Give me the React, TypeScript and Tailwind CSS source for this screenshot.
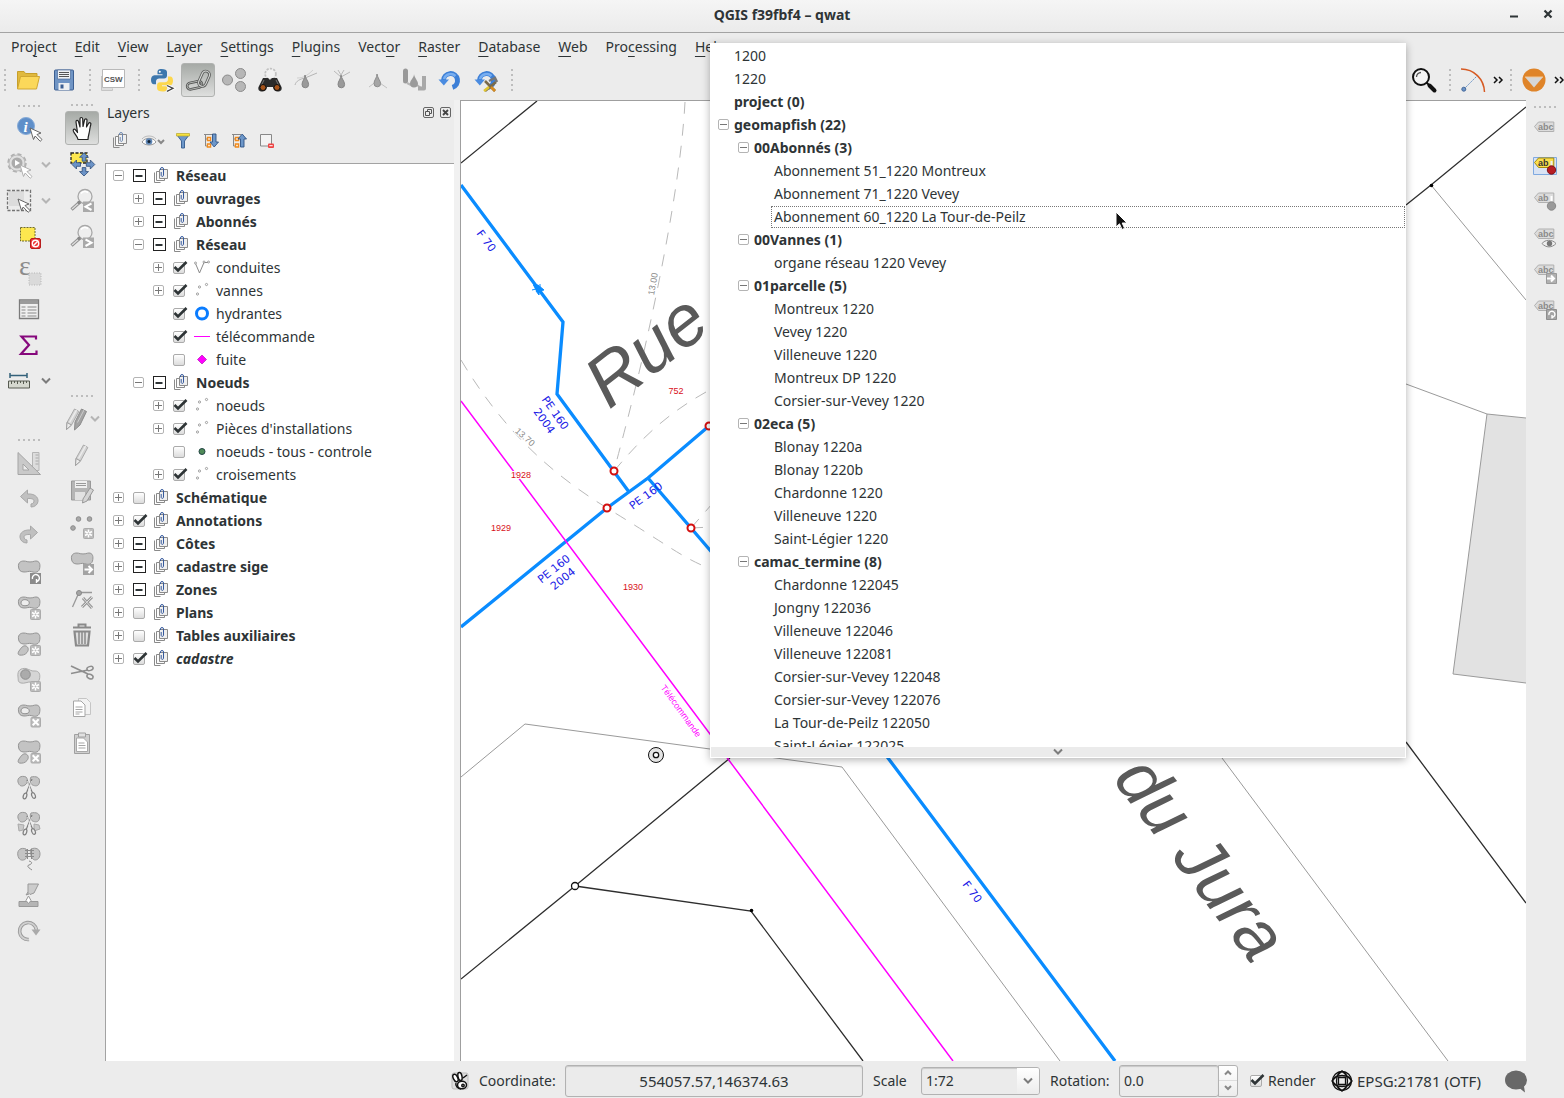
import React from "react";

type IconProps = { children: React.ReactNode; className?: string; box?: string };

function Svg({ children, className = "size-6", box = "0 0 24 24" }: IconProps) {
  return (
    <svg viewBox={box} className={`${className} shrink-0 overflow-visible`} fill="none" aria-hidden="true">
      {children}
    </svg>
  );
}

const BLOB =
  "M1.5 8C.8 3 4.5 1.5 8.500 2.2c3 1 6 1 9 0C21.500 1.200 23.500 4 22.800 8.500c-.5 5-4.500 5.500-8 4.200-3-1-5 .5-7.800.3C3.500 13 1.800 11 1.500 8Z";

const Blob = () => <path d={BLOB} fill="#c3c3c3" stroke="#959595" />;

const StarBadge = ({ x = 13, y = 14 }: { x?: number; y?: number }) => (
  <g transform={`translate(${x} ${y})`}>
    <rect x=".5" y=".5" width="10" height="10" rx="1" fill="#bcbcbc" stroke="#ababab" />
    <path d="M5.500 1.500v8M2 3.500l7 4M9 3.500l-7 4" stroke="#fff" strokeWidth="1.500" />
    <circle cx="5.500" cy="5.500" r="1" fill="#bcbcbc" />
  </g>
);

const CrossBadge = () => (
  <g transform="translate(13.500 14)">
    <rect x=".5" y=".5" width="9.500" height="9.500" rx="1" fill="#bcbcbc" stroke="#ababab" />
    <path d="M2.200 2.200l6 6M8.200 2.200l-6 6" stroke="#fff" strokeWidth="2" />
  </g>
);

const Egg = () => (
  <path d="M9 15c2.500 1 3 4 1 6.500-2 2.500-5 3-7.500 2.500-2-.5-1.500-2.500-.5-4 2-3 4-6 7-5Z" fill="#c3c3c3" stroke="#959595" />
);

const Snips = () => (
  <g stroke="#7e7e7e" strokeWidth="1.200">
    <path d="M10 5l6 14M15 4l-6 15" />
    <path d="M10.500 6l3 9M14.500 6l-3 9" stroke="#eee" strokeWidth=".8" />
    <ellipse cx="8" cy="21" rx="1.700" ry="3" fill="#ececec" transform="rotate(18 8 21)" />
    <ellipse cx="16.500" cy="20.500" rx="1.700" ry="3" fill="#ececec" transform="rotate(-22 16.500 20.500)" />
  </g>
);

const Pointer = ({ x, y, stroke = "#666" }: { x: number; y: number; stroke?: string }) => (
  <path
    transform={`translate(${x} ${y})`}
    d="M0 0l11 5-4 1.500 5 5-1.800 1.800-5-5.300L3.500 11.500Z"
    fill="#fff"
    stroke={stroke}
    strokeLinejoin="round"
  />
);

const Pencil = ({ x = 0, y = 0 }: { x?: number; y?: number }) => (
  <g transform={`translate(${x} ${y})`} strokeLinejoin="round">
    <path d="M5 14.500L12.500 1l4.300 2.500L9.500 17 4.500 21.500Z" fill="#d4d4d4" stroke="#a9a9a9" />
    <path d="M7.500 14.500l7-12.500" stroke="#ececec" strokeWidth="1.500" />
    <path d="M5 14.500l4.500 2.500L4.500 21.500Z" fill="#ececec" stroke="#a0a0a0" />
  </g>
);

const Floppy = ({ body, edge, paper }: { body: string; edge: string; paper: string }) => (
  <>
    <path d="M2.500 3a1 1 0 0 1 1-1h17a1 1 0 0 1 1 1v18a1 1 0 0 1-1 1h-17a1 1 0 0 1-1-1Z" fill={body} stroke={edge} />
    <path d="M5.500 2h13v9h-13Z" fill={paper} stroke={edge} strokeWidth=".6" />
    <path d="M7 4.500h10M7 6.500h10M7 8.500h10" stroke="#555" />
    <path d="M6.500 15h11v7h-11Z" fill={paper} />
    <path d="M8.500 16.500h3v4h-3Z" fill={edge} />
  </>
);

const Arrow4 = () => (
  <path
    d="M14 .8l4.500 4.400h-2.700v4h-3.600v-4H9.500ZM14 24l4.500-4.400h-2.700v-4h-3.600v4H9.500ZM2 12.500L6.500 8v2.700h4v3.600h-4V17ZM24.800 12.500L20.300 8v2.700h-4v3.600h4V17Z"
    fill="#6b93c7"
    stroke="#2d4d78"
    strokeWidth=".8"
  />
);

const Label = ({ text, fill = "#dcdcdc", edge = "#b0b0b0", color = "#8a8a8a" }: { text: string; fill?: string; edge?: string; color?: string }) => (
  <g>
    <path d="M1.500 7.500L5.500 3h15.300v9.500H5.500Z" fill={fill} stroke={edge} />
    <text x="5" y="11" fontSize="9" fontWeight="700" fill={color} fontFamily="Liberation Sans, sans-serif">
      {text}
    </text>
  </g>
);

const Undo = () => (
  <>
    <path d="M5.500 12.500a7 7 0 1 1 9 6.800" stroke="#3d7fd6" strokeWidth="5" />
    <path d="M6 11a7 7 0 0 1 11.500-3" stroke="#78aef0" strokeWidth="2.500" />
    <path d="M.5 11.500h10.500l-5.200 6Z" fill="#4a8be0" />
  </>
);

const Magnifier = ({ dir }: { dir: "l" | "r" }) => (
  <Svg>
    <circle cx="15" cy="8.500" r="7" fill="#eee" stroke="#a8a8a8" strokeWidth="1.300" />
    <path d="M11 5.500a5 5 0 0 1 7-1" stroke="#fff" strokeWidth="1.600" />
    <path d="M10 14l-8.500 7.500" stroke="#8e8e8e" strokeWidth="3.200" />
    <path d="M10 14l-8 7" stroke="#dedede" strokeWidth="1.400" />
    <circle cx="9" cy="14.500" r="1.700" fill="#888" />
    <path d="M13 13.500h11V24H13Z" fill="#a9a9a9" />
    <path d={dir === "l" ? "M21.500 15.500l-6 3.200 6 3.300" : "M15.500 15.500l6 3.200-6 3.300"} stroke="#fff" strokeWidth="2" />
  </Svg>
);

const ico = {
  open: (
    <Svg>
      <path d="M1.500 21V3.500h6.500l1.500 2h11.500V9" fill="#e0b93e" stroke="#c79f2a" />
      <path d="M1.500 21L4.500 8.500h19L20.500 21Z" fill="#fbd85a" stroke="#d0a732" strokeLinejoin="round" />
    </Svg>
  ),
  save: (
    <Svg>
      <Floppy body="#6f94c4" edge="#3c5f92" paper="#eef0f2" />
    </Svg>
  ),
  csw: (
    <Svg>
      <path d="M.5 8v14.500h11v-2" fill="#ddd" stroke="#c4c4c4" />
      <path d="M1.500 1.500h22v18h-22Z" fill="#fff" stroke="#b9b9b9" />
      <text x="3" y="14" fontSize="8" fontWeight="700" fill="#555" fontFamily="Liberation Sans, sans-serif">
        CSW
      </text>
    </Svg>
  ),
  python: (
    <Svg>
      <path d="M11.500 1C8 1 7.500 2.500 7.500 4v2.200h5v1H4.500C2 7.200 1 9.500 1 12c0 2.700 1.300 4.300 3 4.300h2v-2.800c0-2 1.500-3 3.200-3h5c1.600 0 2.800-1.300 2.800-2.800V4c0-2-2-3-5.500-3Z" fill="#3d77ad" />
      <path d="M12.800 23.500c3.500 0 4.200-1.500 4.200-3v-2.200h-5v-1h8c2.300 0 3-2.300 3-4.800 0-2.700-1.200-4-2.800-4h-2.200v2.800c0 2-1.400 3-3.100 3h-5c-1.600 0-2.800 1.300-2.800 2.900v3.300c0 2 2.200 3 5.700 3Z" fill="#fdd74c" />
      <circle cx="9.800" cy="3.700" r="1" fill="#fff" />
      <path d="M17 17.500l6 2.800-6 3" stroke="#fff" strokeWidth="3" />
      <path d="M17 17.500l6 2.800-6 3" stroke="#444" strokeWidth="1.300" />
    </Svg>
  ),
  link: (
    <Svg>
      <rect x="1" y="14" width="15" height="6.500" rx="3.250" transform="rotate(-12 8.500 17)" stroke="#505250" strokeWidth="2.600" />
      <rect x="1" y="14" width="15" height="6.500" rx="3.250" transform="rotate(-12 8.500 17)" stroke="#c4c6c4" strokeWidth=".8" />
      <rect x="10" y="7" width="16" height="7.500" rx="3.750" transform="rotate(-66 18 10.700)" stroke="#606260" strokeWidth="2.800" />
      <rect x="10" y="7" width="16" height="7.500" rx="3.750" transform="rotate(-66 18 10.700)" stroke="#dcdedc" />
    </Svg>
  ),
  circles: (
    <Svg>
      <g fill="#b7b7b7" stroke="#8b8b8b">
        <circle cx="5.500" cy="12" r="5" />
        <circle cx="18.500" cy="5.500" r="5" />
        <circle cx="18.500" cy="18.500" r="5" />
      </g>
    </Svg>
  ),
  binoculars: (
    <Svg>
      <circle cx="12.500" cy="6" r="5" fill="#eee" stroke="#c2c2c2" strokeWidth="2.500" strokeDasharray="2 1.200" />
      <circle cx="12.500" cy="6" r="4.500" fill="#f1f1f1" />
      <path d="M5 10h5l2 2 2-2h5l4.500 9c.8 3-1 4.500-3.500 4.500s-4.500-1-5-4.500h-6c-.5 3.500-2.500 4.500-5 4.500S-.3 22 .5 19Z" fill="#2b2b2b" />
      <path d="M6 12l-3 6M18 12l3 6" stroke="#777" />
      <circle cx="5" cy="19.500" r="3" fill="#a4531b" stroke="#111" />
      <circle cx="19" cy="19.500" r="3" fill="#a4531b" stroke="#111" />
    </Svg>
  ),
  drop1: (
    <Svg>
      <path d="M1 17c1-4 5-6 10-7l12-5" stroke="#b5b5b5" />
      <path d="M3 10c6 0 10-2 16-8" stroke="#d0d0d0" />
      <path d="M11 7c0 4-3 6-3 9.500a3.300 3.300 0 0 0 6.600 0C14.600 13 11.500 11 11 7Z" fill="#9a9a9a" stroke="#858585" />
    </Svg>
  ),
  drop2: (
    <Svg>
      <path d="M4 3l7 6 9-5M8 2l3 5 3-5" stroke="#b9b9b9" />
      <path d="M11 7c0 4-3 6-3 9.500a3.300 3.300 0 0 0 6.600 0C14.600 13 11.500 11 11 7Z" fill="#9a9a9a" stroke="#858585" />
    </Svg>
  ),
  drop3: (
    <Svg>
      <path d="M3 19l8-6 10 7" stroke="#c2c2c2" />
      <path d="M11 6c0 4-3 6-3 9.500a3.300 3.300 0 0 0 6.600 0C14.600 13 11.500 10 11 6Z" fill="#a5a5a5" stroke="#8d8d8d" />
    </Svg>
  ),
  drop4: (
    <Svg>
      <path d="M3.500 3v10" stroke="#999" strokeWidth="5" strokeLinecap="round" />
      <path d="M5 15l4 2M15 17l4 3" stroke="#b5b5b5" strokeWidth="2" />
      <path d="M22 8v12.500h-6" stroke="#a8a8a8" strokeWidth="4" strokeLinejoin="round" />
      <path d="M12 6c0 4-4 6-4 9.500a4 4 0 0 0 8 0C16 13 12.500 10 12 6Z" fill="#9a9a9a" />
    </Svg>
  ),
  undoBlue: (
    <Svg>
      <Undo />
    </Svg>
  ),
  undoTools: (
    <Svg>
      <Undo />
      <path d="M11 13l10 10M22 14L11 23" stroke="#7a6a4a" strokeWidth="2.600" />
      <path d="M15 13l6-3 2 4" stroke="#777" strokeWidth="2.500" />
      <path d="M10 23l5-4" stroke="#e0c62f" strokeWidth="2.500" />
      <path d="M17 19l4 4" stroke="#d88b1e" strokeWidth="2.500" />
    </Svg>
  ),
  search: (
    <Svg>
      <circle cx="9" cy="9" r="8" stroke="#111" strokeWidth="2" fill="#f4f4f4" />
      <path d="M4.500 9a4.500 4.500 0 0 1 4.500-4.500" stroke="#555" strokeWidth="1.300" />
      <path d="M14.500 14.500l3 3" stroke="#111" strokeWidth="2" />
      <path d="M17.500 17.500l5 5" stroke="#111" strokeWidth="4" strokeLinecap="round" />
    </Svg>
  ),
  arc: (
    <Svg>
      <path d="M0 1c13 0 23 10 23.500 23" stroke="#d65a23" strokeWidth="1.500" />
      <path d="M3 21L16 8" stroke="#6b93c7" strokeDasharray="2 1" />
      <circle cx="2.800" cy="21.200" r="2" fill="#6b93c7" stroke="#44699b" />
    </Svg>
  ),
  orange: (
    <Svg>
      <circle cx="12" cy="12" r="11.500" fill="#df8429" />
      <path d="M3 9h18l-9 10.500Z" fill="#d6d6d6" />
      <path d="M3 9h18" stroke="#f3c795" />
    </Svg>
  ),
  info: (
    <Svg>
      <circle cx="9" cy="9" r="8.500" fill="#5f8fc9" stroke="#86abd8" />
      <text x="6.500" y="15" fontSize="15" fontStyle="italic" fontWeight="700" fill="#fff" fontFamily="Liberation Serif, serif">
        i
      </text>
      <Pointer x={13} y={11} />
    </Svg>
  ),
  gear: (
    <Svg>
      <circle cx="10" cy="10" r="8.500" stroke="#b0b0b0" strokeWidth="2.500" strokeDasharray="4 2.700" />
      <circle cx="10" cy="10" r="8" fill="#e0e0e0" stroke="#bbb" />
      <circle cx="10" cy="10" r="5.500" fill="#ababab" />
      <path d="M8 7l5 3-5 3Z" fill="#fff" />
      <Pointer x={13} y={12} stroke="#b0b0b0" />
    </Svg>
  ),
  select: (
    <Svg>
      <path d="M2 2h15v15H2Z" fill="#dcdcdc" />
      <path d="M.5 1.500h23v20H.5Z" stroke="#747474" strokeWidth="1.300" strokeDasharray="3 1.500" />
      <Pointer x={11} y={10} />
    </Svg>
  ),
  deselect: (
    <Svg>
      <path d="M3.500 2.500h14.500v13.500H3.500Z" fill="#fde74f" stroke="#6f6a2c" strokeDasharray="2 1" />
      <rect x="13.500" y="13.500" width="10" height="10" rx="1.500" fill="#e33" stroke="#b71c1c" />
      <circle cx="18.500" cy="18.500" r="3.200" stroke="#fff" strokeWidth="1.400" />
      <path d="M16.500 20.500l4-4" stroke="#fff" strokeWidth="1.400" />
    </Svg>
  ),
  epsilon: (
    <Svg>
      <text x="2" y="14" fontSize="28" fill="#8b8b8b" fontFamily="Liberation Serif, serif">
        ε
      </text>
      <path d="M12 12h12v12H12Z" fill="#dadada" stroke="#b5b5b5" strokeDasharray="1 1.500" />
    </Svg>
  ),
  table: (
    <Svg>
      <path d="M2.500 3h19v18.500h-19Z" fill="#f0f0f0" stroke="#7b7b7b" strokeWidth="1.300" />
      <path d="M3 5.500h18" stroke="#9b9b9b" strokeWidth="3" />
      <path d="M4.500 10h4M10.500 10h9M4.500 13h4M10.500 13h9M4.500 16h4M10.500 16h9M4.500 19h4M10.500 19h9" stroke="#888" />
    </Svg>
  ),
  sigma: (
    <Svg>
      <path d="M19 6.500V3.500H4.500l7.500 8.500-8 9H19.500v-3.500" stroke="#86087c" strokeWidth="2.200" />
    </Svg>
  ),
  ruler: (
    <Svg>
      <path d="M3 6.500h17M3 4v5M20 4v5" stroke="#33617a" strokeWidth="1.500" />
      <path d="M1.500 12h21v7h-21Z" fill="#d5d8cf" stroke="#565a50" />
      <path d="M4.500 12v3M7.500 12v2M10.500 12v3M13.500 12v2M16.500 12v3M19.500 12v2" stroke="#565a50" />
    </Svg>
  ),
  square: (
    <Svg>
      <path d="M15.500 1.500h6.500v18h-6.500Z" fill="#ddd" stroke="#b5b5b5" />
      <path d="M18.500 4h3M18.500 7h3M18.500 10h3M18.500 13h3" stroke="#aaa" />
      <path d="M1 1.500v22h22.500ZM6 13l6 6H6Z" fill="#c9c9c9" fillRule="evenodd" stroke="#a5a5a5" />
    </Svg>
  ),
  undo: (
    <Svg>
      <path d="M3.500 9.500l7-6.500v4c7-.5 11 3 10.500 7.500-.5 3.500-3.500 5.500-7 5.500 0-1 0-2 0-3 2-.3 3-1.500 3-3 0-2-2.500-2.700-6.500-2.500v4.500Z" fill="#c0c0c0" stroke="#a8a8a8" />
    </Svg>
  ),
  redo: (
    <Svg>
      <path d="M20.500 9.500l-7-6.500v4C6.500 6.500 2.500 10 3 14.500c.5 3.500 3.500 5.500 7 5.500v-3c-2-.3-3-1.500-3-3 0-2 2.500-2.700 6.500-2.500v4.500Z" fill="#c0c0c0" stroke="#a8a8a8" />
    </Svg>
  ),
  rotateFeature: (
    <Svg>
      <Blob />
      <path d="M13 14h11v11H13Z" fill="#8b8b8b" />
      <path d="M15.500 20a3.500 3.500 0 1 1 4 2.500M19.500 24v-4" stroke="#fff" strokeWidth="1.400" />
    </Svg>
  ),
  addRing: (
    <Svg>
      <Blob />
      <path d="M4 8c0-3 3-4 6-3s3 5 0 5.500-6 0-6-2.500Z" fill="#ededed" stroke="#8f8f8f" />
      <StarBadge />
    </Svg>
  ),
  addPart: (
    <Svg>
      <Blob />
      <Egg />
      <StarBadge />
    </Svg>
  ),
  fillRing: (
    <Svg>
      <path d="M1 10C0 3 4 1 9 1.500c3 1 6 3 9 2.500 4 0 5.500 3 4.500 8-1 4-5 4-8 3-4-.5-7 2-10.500 1S1.500 13 1 10Z" fill="#d5d5d5" stroke="#adadad" />
      <circle cx="8.500" cy="7.500" r="4.800" fill="#ababab" stroke="#8f8f8f" />
      <StarBadge />
    </Svg>
  ),
  delRing: (
    <Svg>
      <Blob />
      <path d="M4 8c0-3 3-4 6-3s3 5 0 5.500-6 0-6-2.500Z" fill="#ededed" stroke="#8f8f8f" />
      <CrossBadge />
    </Svg>
  ),
  delPart: (
    <Svg>
      <Blob />
      <Egg />
      <CrossBadge />
    </Svg>
  ),
  split: (
    <Svg>
      <path d="M9 2C4 0 0 3 1 7s4 5 7 3 3-6 1-8ZM14 2c5-1 9 0 8.500 5s-5 4-7 3-3-6-1.500-8Z" fill="#c4c4c4" stroke="#999" />
      <Snips />
    </Svg>
  ),
  splitParts: (
    <Svg>
      <path d="M9 2C4 0 0 3 1 7s4 5 7 3 3-6 1-8ZM14 2c5-1 9 0 8.500 5s-5 4-7 3-3-6-1.500-8Z" fill="#c4c4c4" stroke="#999" />
      <path d="M1 13l6 1-1 5-4 1ZM17 13l5 1 1 4-6 2Z" fill="#c9c9c9" stroke="#aaa" />
      <Snips />
    </Svg>
  ),
  merge: (
    <Svg>
      <path d="M9 2C4 0 0 3 .8 8s4 6 7 4.500S11 4 9 2ZM14 2c5-2 9 0 9 5s-4 7-6.500 5.500S12.500 4 14 2Z" fill="#c4c4c4" stroke="#999" />
      <path d="M8 3.500h9M8 6.500h9M8 9.500h9M10.500 2v10M14.500 2v10M12 14c4 1 3 3 0 4s0 3 3 5" stroke="#8b8b8b" />
    </Svg>
  ),
  fillTool: (
    <Svg>
      <path d="M11 1h10.500l-4.500 9-4 1.500-2-2Z" fill="#ccc" stroke="#999" />
      <path d="M11 9l-2 3 3-1M2 18.500h19v5H2Z" fill="#b5b5b5" stroke="#999" />
      <path d="M11.500 13l2.500 4.500-2.500 3-2.500-3Z" fill="#fff" stroke="#999" />
    </Svg>
  ),
  rotate: (
    <Svg>
      <path d="M12 20.500a8.500 8.500 0 1 1 7.500-9.500" stroke="#999" strokeWidth="3.600" />
      <path d="M12 20.500a8.500 8.500 0 1 1 7.500-9.500" stroke="#d0d0d0" strokeWidth="1.800" />
      <path d="M14.500 10.500h9l-4.500 6Z" fill="#aaa" />
    </Svg>
  ),
  hand: (
    <Svg>
      <path
        d="M8 23.500c-.5-3-3-5-4.500-8-1-2.200.8-3.200 2-1.600l2 2.600L6 6c-.2-2 2-2.300 2.500-.5L10 11V3c0-2 2.500-2 2.700 0L13 10.500 14.500 4c.4-1.800 2.700-1.400 2.500.5L16.500 11l2-3.500c.9-1.500 2.900-.6 2.300 1-1 3-1 6-1.800 9-.5 2-1 4-1 6Z"
        fill="#fff"
        stroke="#222"
        strokeWidth="1.200"
        strokeLinejoin="round"
      />
    </Svg>
  ),
  panSelection: (
    <Svg>
      <path d="M1 1h16v10H1Z" fill="#fde74f" stroke="#222" strokeWidth="1.300" strokeDasharray="3 1.500" />
      <Arrow4 />
    </Svg>
  ),
  zoomLast: <Magnifier dir="l" />,
  zoomNext: <Magnifier dir="r" />,
  pencils: (
    <Svg>
      <Pencil x={-4} y={1} />
      <path d="M9 15L15.500 2l5 2.500L14 18 8.500 23Z" fill="#a3a3a3" stroke="#8b8b8b" />
      <path d="M11.500 15.500L18 3" stroke="#cdcdcd" />
    </Svg>
  ),
  pencil: (
    <Svg>
      <Pencil x={1} y={1} />
    </Svg>
  ),
  savePencil: (
    <Svg>
      <path d="M1.500 2h19v19h-19Z" fill="#b5b5b5" stroke="#999" />
      <path d="M5 2h12v7H5Z" fill="#efefef" />
      <path d="M6 4.500h10M6 6.500h10" stroke="#999" />
      <path d="M5 13h10v8H5Z" fill="#e2e2e2" />
      <path d="M13 20l7-11 3.500 2L17 22l-4.500 2Z" fill="#d5d5d5" stroke="#999" />
    </Svg>
  ),
  points: (
    <Svg>
      <g fill="#a8a8a8" stroke="#8c8c8c">
        <circle cx="8.500" cy="4" r="2.300" />
        <circle cx="19.500" cy="4" r="2.300" />
        <circle cx="3" cy="13" r="2.300" />
      </g>
      <StarBadge x={13} y={13} />
    </Svg>
  ),
  moveFeature: (
    <Svg>
      <Blob />
      <path d="M13 13h11v11H13Z" fill="#a3a3a3" />
      <path d="M14.500 18.500h7M18.500 15l3.500 3.500-3.500 3.500" stroke="#fff" strokeWidth="2" />
    </Svg>
  ),
  nodeTool: (
    <Svg>
      <path d="M2.500 20L9 5.500h13" stroke="#999" strokeWidth="1.300" />
      <circle cx="9" cy="6" r="2.500" fill="#a5a5a5" stroke="#888" />
      <path d="M12 20L22 10M13 11l9 10" stroke="#999" strokeWidth="3" />
      <path d="M12 20L22 10M13 11l9 10" stroke="#ddd" />
    </Svg>
  ),
  trash: (
    <Svg>
      <path d="M3 4.500h18M8.500 4V1.500h7V4" stroke="#8a8a8a" strokeWidth="2" />
      <path d="M4.500 8.500h15l-1.500 14H6Z" fill="#dedede" stroke="#8a8a8a" strokeWidth="2.200" />
      <path d="M9 9v12M12 9v12M15 9v12" stroke="#8a8a8a" strokeWidth="1.500" />
    </Svg>
  ),
  scissors: (
    <Svg>
      <path d="M1 7l17 8M1 14.500L18 11" stroke="#8e8e8e" strokeWidth="1.700" />
      <ellipse cx="20" cy="9.500" rx="3.200" ry="2" stroke="#8e8e8e" strokeWidth="1.500" transform="rotate(-18 20 9.500)" />
      <ellipse cx="20" cy="17.500" rx="3.200" ry="2.200" stroke="#8e8e8e" strokeWidth="1.500" transform="rotate(25 20 17.500)" />
    </Svg>
  ),
  copy: (
    <Svg>
      <path d="M8.500 3.500h8l4 4v12h-12Z" fill="#f2f2f2" stroke="#c5c5c5" />
      <path d="M3.500 6h7.500l4 4v11.500H3.500Z" fill="#fff" stroke="#a5a5a5" />
      <path d="M5.500 12h7M5.500 14.500h7M5.500 17h7M5.500 19h4" stroke="#a5a5a5" />
    </Svg>
  ),
  paste: (
    <Svg>
      <path d="M4.500 3.500h15v19h-15Z" fill="#cfcfcf" stroke="#a0a0a0" />
      <path d="M8.500 2h7v4h-7Z" fill="#e0e0e0" stroke="#a0a0a0" />
      <path d="M6.500 7h7l4 4v9.500h-11Z" fill="#fff" stroke="#a8a8a8" />
      <path d="M8.500 12h6M8.500 14.500h7M8.500 17h7" stroke="#a5a5a5" />
    </Svg>
  ),
  abc: (
    <Svg>
      <g transform="translate(0 1)">
        <Label text="abc" />
      </g>
    </Svg>
  ),
  abPin: (
    <Svg>
      <path d="M.5 3.500h23v17h-23Z" fill="#d9e3f3" stroke="#7fa9e0" />
      <g transform="translate(0 1)">
        <Label text="ab" fill="#fbe04c" edge="#a38a10" color="#333" />
      </g>
      <path d="M18.500 7v6" stroke="#eee" strokeWidth="2" />
      <circle cx="18.500" cy="16" r="4.200" fill="#b81d24" stroke="#7d1015" />
    </Svg>
  ),
  abPinGrey: (
    <Svg>
      <Label text="ab" />
      <path d="M18.500 6v6" stroke="#fff" strokeWidth="2" />
      <circle cx="18.500" cy="16" r="4.200" fill="#999" stroke="#888" />
    </Svg>
  ),
  abEye: (
    <Svg>
      <Label text="abc" />
      <path d="M9 17.500c3-4 10-4.500 14 0-4 4.500-10 4.500-14 0Z" fill="#eee" stroke="#888" />
      <circle cx="16.500" cy="17.500" r="2.700" fill="#777" />
    </Svg>
  ),
  abMove: (
    <Svg>
      <Label text="abc" />
      <path d="M13.500 11.500h10v10h-10Z" fill="#b0b0b0" stroke="#999" />
      <path d="M14 16.500h7M18 13.500l3 3-3 3" stroke="#fff" strokeWidth="2" />
    </Svg>
  ),
  abRotate: (
    <Svg>
      <Label text="abc" />
      <path d="M13.500 11.500h10v10h-10Z" fill="#a5a5a5" stroke="#8e8e8e" />
      <path d="M16 17a3 3 0 1 1 3.500 2.200M19 20.500V17" stroke="#fff" strokeWidth="1.400" />
    </Svg>
  ),
};

type IconName = keyof typeof ico;

function ToolButton({ icon, label, pressed = false }: { icon: IconName; label: string; pressed?: boolean }) {
  return (
    <button type="button" aria-label={label} className="flex size-9 shrink-0 items-center justify-center">
      <span
        className={
          pressed
            ? "flex size-[34px] items-center justify-center rounded-[3px] border border-[#b0b2b0] bg-linear-to-b from-[#a6aaa6] to-[#dedfde]"
            : "flex size-[34px] items-center justify-center"
        }
      >
        {ico[icon]}
      </span>
    </button>
  );
}

function Chevron({ dark = false }: { dark?: boolean }) {
  return (
    <svg viewBox="0 0 10 8" className="h-2 w-2.5 shrink-0" fill="none" aria-hidden="true">
      <path d="M1 1.500l4 4 4-4" stroke={dark ? "#7c7c7c" : "#b5b5b5"} strokeWidth="2" />
    </svg>
  );
}

function VGrip({ first = false }: { first?: boolean }) {
  return (
    <span className={first ? "flex w-2.5 shrink-0 flex-col gap-[3px] pl-1" : "flex w-[13px] shrink-0 flex-col gap-[3px] pl-[7px]"}>
      {[0, 1, 2, 3, 4].map((n) => (
        <i key={n} className="size-[2px] bg-[#bdbdbd]" />
      ))}
    </span>
  );
}

function HGrip() {
  return (
    <span className="flex h-2.5 shrink-0 items-center justify-center gap-[3px]">
      {[0, 1, 2, 3, 4].map((n) => (
        <i key={n} className="size-[2px] bg-[#bdbdbd]" />
      ))}
    </span>
  );
}

const menus: [string, string, string][] = [
  ["Pro", "j", "ect"],
  ["", "E", "dit"],
  ["", "V", "iew"],
  ["", "L", "ayer"],
  ["", "S", "ettings"],
  ["", "P", "lugins"],
  ["Vect", "o", "r"],
  ["", "R", "aster"],
  ["", "D", "atabase"],
  ["", "W", "eb"],
  ["Pro", "c", "essing"],
  ["", "H", "elp"],
];

function Expander({ open }: { open: boolean }) {
  return (
    <button
      type="button"
      aria-label={open ? "Collapse" : "Expand"}
      aria-expanded={open}
      className="flex size-[11px] shrink-0 items-center justify-center rounded-[2px] border border-[#b4b4b4] bg-white"
    >
      <svg viewBox="0 0 7 7" className="size-[7px]" aria-hidden="true">
        <path d={open ? "M0 3.500h7" : "M0 3.500h7M3.500 0v7"} stroke="#777" />
      </svg>
    </button>
  );
}

type Check = "on" | "off" | "partial";

function CheckBox({ state, id }: { state: Check; id: string }) {
  return (
    <span className="relative flex size-4 shrink-0 items-center justify-center">
      <input
        id={id}
        type="checkbox"
        defaultChecked={state === "on"}
        className={
          state === "partial"
            ? "size-[13px] appearance-none border border-[#222] bg-white"
            : "size-3 appearance-none rounded-[2px] border border-[#ababab] bg-linear-to-b from-white to-[#dcdcdc]"
        }
      />
      {state !== "off" && (
        <svg viewBox="0 0 16 16" className="pointer-events-none absolute inset-0 size-4 overflow-visible" fill="none" aria-hidden="true">
          <path
            d={state === "on" ? "M3.500 7l3.500 3.500L15.500 2" : "M4.500 8h7"}
            stroke="#2e3436"
            strokeWidth={state === "on" ? 2.6 : 2}
          />
        </svg>
      )}
    </span>
  );
}

function GroupIcon({ muted = false }: { muted?: boolean }) {
  return (
    <Svg className="size-4" box="0 0 16 16">
      <path d="M.5 4.500v10H6.500" stroke="#8a8a8a" />
      <path d="M2.500 3.500h8v9h-8Z" fill="#fafafa" stroke="#8a8a8a" />
      <path d="M5.500 1.500h8v9H5.500Z" fill="#efefef" stroke="#8a8a8a" />
      <path d="M6.500 2V1a1.500 1.500 0 0 1 3 0v6.500a1.200 1.200 0 0 1-2.300 0V4" stroke={muted ? "#6e88b0" : "#35599c"} />
    </Svg>
  );
}

type LayerIcon = "group" | "line" | "points" | "ring" | "pink" | "diamond" | "dot";

function LayerSymbol({ kind }: { kind: LayerIcon }) {
  if (kind === "group") return <GroupIcon />;
  return (
    <Svg className="size-4" box="0 0 16 16">
      {kind === "line" && (
        <>
          <path d="M1.500 3.500L5.500 13 10 2.500h4" stroke="#8a8a8a" />
          <g fill="#fff" stroke="#8a8a8a" strokeWidth=".8">
            <circle cx="1.500" cy="3" r="1" />
            <circle cx="10" cy="2" r="1" />
            <circle cx="14.500" cy="2" r="1" />
          </g>
        </>
      )}
      {kind === "points" && (
        <g fill="#fff" stroke="#8a8a8a" strokeWidth=".8">
          <circle cx="3.500" cy="11" r="1.100" />
          <circle cx="5.500" cy="4" r="1.100" />
          <circle cx="12.500" cy="1.500" r="1.100" />
        </g>
      )}
      {kind === "ring" && <circle cx="8" cy="7.500" r="5.500" stroke="#0a7cff" strokeWidth="3" />}
      {kind === "pink" && <path d="M0 7.500h16" stroke="#ff00ff" />}
      {kind === "diamond" && <path d="M8 3L12.500 7.500 8 12 3.500 7.500Z" fill="#ff00ff" stroke="#a0a" strokeWidth=".6" />}
      {kind === "dot" && <circle cx="8" cy="7.500" r="3" fill="#4f8a57" stroke="#244" />}
    </Svg>
  );
}

type Layer = { name: string; level: 0 | 1 | 2; open?: boolean; check: Check; icon?: LayerIcon; italic?: boolean };

const layers: Layer[] = [
  { name: "Réseau", level: 0, open: true, check: "partial" },
  { name: "ouvrages", level: 1, open: false, check: "partial" },
  { name: "Abonnés", level: 1, open: false, check: "partial" },
  { name: "Réseau", level: 1, open: true, check: "partial" },
  { name: "conduites", level: 2, open: false, check: "on", icon: "line" },
  { name: "vannes", level: 2, open: false, check: "on", icon: "points" },
  { name: "hydrantes", level: 2, check: "on", icon: "ring" },
  { name: "télécommande", level: 2, check: "on", icon: "pink" },
  { name: "fuite", level: 2, check: "off", icon: "diamond" },
  { name: "Noeuds", level: 1, open: true, check: "partial" },
  { name: "noeuds", level: 2, open: false, check: "on", icon: "points" },
  { name: "Pièces d'installations", level: 2, open: false, check: "on", icon: "points" },
  { name: "noeuds - tous - controle", level: 2, check: "off", icon: "dot" },
  { name: "croisements", level: 2, open: false, check: "on", icon: "points" },
  { name: "Schématique", level: 0, open: false, check: "off" },
  { name: "Annotations", level: 0, open: false, check: "on" },
  { name: "Côtes", level: 0, open: false, check: "partial" },
  { name: "cadastre sige", level: 0, open: false, check: "partial" },
  { name: "Zones", level: 0, open: false, check: "partial" },
  { name: "Plans", level: 0, open: false, check: "off" },
  { name: "Tables auxiliaires", level: 0, open: false, check: "off" },
  { name: "cadastre", level: 0, open: false, check: "on", italic: true },
];

const layerIndent = ["pl-[7px]", "pl-[27px]", "pl-[47px]"];

function LayersPanel() {
  return (
    <section aria-label="Layers" className="flex w-[349px] shrink-0 flex-col">
      <header className="flex h-6 items-center pt-px pr-[3px] pl-0.5">
        <h2 className="flex-1">Layers</h2>
        <button type="button" aria-label="Float panel" className="mr-1.5 flex size-[11px] items-center justify-center rounded-[2px] border border-[#666]">
          <Svg className="size-[7px]" box="0 0 7 7">
            <path d="M.5 2.500h4v4h-4ZM2.500 2V.5h4v4H5" stroke="#555" />
          </Svg>
        </button>
        <button type="button" aria-label="Close panel" className="flex size-[11px] items-center justify-center rounded-[2px] border border-[#666]">
          <Svg className="size-[7px]" box="0 0 7 7">
            <path d="M1 1l5 5M6 1L1 6" stroke="#444" strokeWidth="1.800" />
          </Svg>
        </button>
      </header>
      <div className="flex h-[39px] items-center gap-3 pb-[5px] pl-2">
        <button type="button" aria-label="Add group">
          <GroupIcon muted />
        </button>
        <button type="button" aria-label="Manage visibility" className="-mr-1 flex items-center">
          <Svg className="size-4" box="0 0 16 16">
            <path d="M1 9c3-5 11-5 14 0-3 4-11 4-14 0Z" fill="#fff" stroke="#999" />
            <path d="M1 6c3-4 11-4 14 0" stroke="#bbb" />
            <circle cx="8" cy="8.500" r="3.300" fill="#5f86b5" />
            <circle cx="8" cy="8.500" r="1.500" fill="#123" />
          </Svg>
          <Svg className="h-2 w-2" box="0 0 8 8">
            <path d="M1 3l3 3 3-3" stroke="#888" strokeWidth="2" />
          </Svg>
        </button>
        <button type="button" aria-label="Filter legend" className="ml-0.5">
          <Svg className="size-4" box="0 0 16 16">
            <path d="M2 2h12L9.500 8v7h-3V8Z" fill="#6d97c9" stroke="#3f6596" />
            <path d="M1.500.5h13v2.500h-13Z" fill="#f6e23f" stroke="#b9a62b" strokeWidth=".7" />
          </Svg>
        </button>
        {["Expand all", "Collapse all"].map((t, i) => (
          <button key={t} type="button" aria-label={t}>
            <Svg className="size-4" box="0 0 16 16">
              <path d="M1 1.500h9M2.500 2v11H5M2.500 6H5" stroke="#888" />
              <path d="M4.500 4.500h3v3h-3ZM4.500 11h3v3h-3Z" fill="#fff" stroke="#f08a1c" strokeWidth="1.500" />
              <path
                d={i === 0 ? "M9.500 1h3.500v8h2.500l-4.300 5L7 9h2.500Z" : "M9.500 14h3.500V6h2.500l-4.300-5L7 6h2.500Z"}
                fill="#6d97c9"
                stroke="#2f5285"
                strokeWidth=".9"
              />
            </Svg>
          </button>
        ))}
        <button type="button" aria-label="Remove layer">
          <Svg className="size-4" box="0 0 16 16">
            <path d="M1.500 1.500h11v11.500h-11Z" fill="#f3f3f3" stroke="#888" />
            <rect x="9" y="10.500" width="6" height="4.500" rx="1" fill="#ee4444" />
            <path d="M10.300 12.700h3.400" stroke="#fff" />
          </Svg>
        </button>
      </div>
      <ul className="flex-1 overflow-hidden border-t border-l border-[#a3a3a3] bg-white">
        {layers.map((l, i) => (
          <li key={i} className={`flex h-[23px] items-center ${layerIndent[l.level]}`}>
            <span className="flex w-[18px] shrink-0 items-center">{l.open !== undefined && <Expander open={l.open} />}</span>
            <CheckBox id={`layer-${i}`} state={l.check} />
            <span className="ml-[7px] flex w-[22px] shrink-0">
              <LayerSymbol kind={l.icon ?? "group"} />
            </span>
            <label
              htmlFor={`layer-${i}`}
              className={l.icon ? "whitespace-nowrap" : l.italic ? "font-bold whitespace-nowrap italic" : "font-bold whitespace-nowrap"}
            >
              {l.name}
            </label>
          </li>
        ))}
      </ul>
    </section>
  );
}

const DEJAVU = "DejaVu Sans, sans-serif";
const ARIAL = "Liberation Sans, sans-serif";

type MapText = { t: string; x: number; y: number; r?: number; s: number; c: string; f: string };

const mapTexts: MapText[] = [
  { t: "F 70", x: 486, y: 241, r: 53, s: 11, c: "#1a1ae6", f: DEJAVU },
  { t: "F 70", x: 972, y: 892, r: 53, s: 11, c: "#1a1ae6", f: DEJAVU },
  { t: "PE 160", x: 555, y: 413, r: 55, s: 11, c: "#1a1ae6", f: DEJAVU },
  { t: "2004", x: 544, y: 421, r: 55, s: 11, c: "#1a1ae6", f: DEJAVU },
  { t: "PE 160", x: 646, y: 496, r: -36, s: 11, c: "#1a1ae6", f: DEJAVU },
  { t: "PE 160", x: 554, y: 569, r: -39, s: 11, c: "#1a1ae6", f: DEJAVU },
  { t: "2004", x: 563, y: 579, r: -39, s: 11, c: "#1a1ae6", f: DEJAVU },
  { t: "13.00", x: 653, y: 284, r: -80, s: 9, c: "#8a8a8a", f: ARIAL },
  { t: "13.70", x: 525, y: 437, r: 42, s: 9, c: "#8a8a8a", f: ARIAL },
  { t: "752", x: 676, y: 391, s: 9, c: "#d8101a", f: ARIAL },
  { t: "1928", x: 521, y: 475, s: 9, c: "#d8101a", f: ARIAL },
  { t: "1929", x: 501, y: 528, s: 9, c: "#d8101a", f: ARIAL },
  { t: "1930", x: 633, y: 587, s: 9, c: "#d8101a", f: ARIAL },
  { t: "Télécommande", x: 681, y: 711, r: 54, s: 9, c: "#ff00ff", f: ARIAL },
];

function MapCanvas() {
  return (
    <main className="relative min-w-0 flex-1 overflow-hidden border-t border-l border-[#9f9f9f] bg-white">
      <svg className="absolute inset-0 size-full" fill="none" role="img" aria-label="Map">
        <g transform="translate(-461 -101)">
          <path d="M1526 418L1487 414L1453 674L1526 683Z" fill="#e2e2e2" />
          <g stroke="#9a9a9a">
            <path d="M461 777L525 724L710 749L842 767L1060 1061" />
            <path d="M1222 758L1448 1061M1431 185L1526 300M1406 384L1487 414L1526 418M1487 414L1453 674L1526 683" />
          </g>
          <g stroke="#b9b9b9" strokeDasharray="12 10">
            <path d="M685 102C682 160 668 240 652 315S622 440 614 471" />
            <path d="M461 360C500 425 545 470 607 508S680 556 706 567" />
            <path d="M614 471C640 440 665 415 706 392M691 528L712 504M691 528L712 527" />
          </g>
          <g stroke="#2e2e2e" strokeWidth="1.300">
            <path d="M461 163L537 101M461 979L575 886L730 758M575 886L751 911L863 1061" />
            <path d="M1406 205L1431 185L1526 107M1406 742L1526 903" />
          </g>
          <text transform="translate(609 410) rotate(-38)" fontSize="72" fontStyle="italic" fill="#5a5a5a" fontFamily={ARIAL}>
            Rue
          </text>
          <text transform="translate(1112 779) rotate(53)" fontSize="70" fontStyle="italic" fill="#5a5a5a" fontFamily={ARIAL}>
            du Jura
          </text>
          <g stroke="#0a8cff" strokeWidth="3.300">
            <path d="M461 185L563 322L557 394L629 492" />
            <path d="M461 627L607 508L648 478L709 426M648 478L691 528L888 758L1115 1061" />
          </g>
          <path d="M533 285l5 0 6 5-5 1 0 4-3-4M540 284v4M532 290l4-1" fill="#0a8cff" stroke="#0a8cff" />
          <path d="M461 401L710 734L728 759L953 1061" stroke="#ff00ff" strokeWidth="1.500" />
          <g fill="#fff" stroke="#d40f0f" strokeWidth="2">
            <circle cx="614" cy="471" r="3.500" />
            <circle cx="607" cy="508" r="3.500" />
            <circle cx="691" cy="528" r="3.500" />
            <circle cx="709" cy="426" r="3.500" />
          </g>
          <circle cx="575" cy="886" r="3.500" fill="#fff" stroke="#111" strokeWidth="1.300" />
          <circle cx="751.500" cy="910.500" r="1.800" fill="#000" />
          <circle cx="1431.500" cy="185.500" r="1.800" fill="#000" />
          <circle cx="656" cy="755" r="7.500" fill="#e4e4e4" stroke="#111" />
          <circle cx="656" cy="755" r="2.700" fill="#fff" stroke="#111" strokeWidth="1.300" />
          {mapTexts.map((m, i) => (
            <text
              key={i}
              transform={`translate(${m.x} ${m.y}) rotate(${m.r ?? 0})`}
              textAnchor="middle"
              dominantBaseline="central"
              fontSize={m.s}
              fill={m.c}
              stroke={m.f === ARIAL ? "#fff" : "none"}
              strokeWidth="2"
              paintOrder="stroke"
              fontFamily={m.f}
            >
              {m.t}
            </text>
          ))}
        </g>
      </svg>
    </main>
  );
}

type Result = { t: string; level: 0 | 1 | 2; kind: "item" | "group" | "plain" | "focus" };

const results: Result[] = [
  { t: "1200", level: 0, kind: "item" },
  { t: "1220", level: 0, kind: "item" },
  { t: "project (0)", level: 0, kind: "plain" },
  { t: "geomapfish (22)", level: 0, kind: "group" },
  { t: "00Abonnés (3)", level: 1, kind: "group" },
  { t: "Abonnement 51_1220 Montreux", level: 2, kind: "item" },
  { t: "Abonnement 71_1220 Vevey", level: 2, kind: "item" },
  { t: "Abonnement 60_1220 La Tour-de-Peilz", level: 2, kind: "focus" },
  { t: "00Vannes (1)", level: 1, kind: "group" },
  { t: "organe réseau 1220 Vevey", level: 2, kind: "item" },
  { t: "01parcelle (5)", level: 1, kind: "group" },
  { t: "Montreux 1220", level: 2, kind: "item" },
  { t: "Vevey 1220", level: 2, kind: "item" },
  { t: "Villeneuve 1220", level: 2, kind: "item" },
  { t: "Montreux DP 1220", level: 2, kind: "item" },
  { t: "Corsier-sur-Vevey 1220", level: 2, kind: "item" },
  { t: "02eca (5)", level: 1, kind: "group" },
  { t: "Blonay 1220a", level: 2, kind: "item" },
  { t: "Blonay 1220b", level: 2, kind: "item" },
  { t: "Chardonne 1220", level: 2, kind: "item" },
  { t: "Villeneuve 1220", level: 2, kind: "item" },
  { t: "Saint-Légier 1220", level: 2, kind: "item" },
  { t: "camac_termine (8)", level: 1, kind: "group" },
  { t: "Chardonne 122045", level: 2, kind: "item" },
  { t: "Jongny 122036", level: 2, kind: "item" },
  { t: "Villeneuve 122046", level: 2, kind: "item" },
  { t: "Villeneuve 122081", level: 2, kind: "item" },
  { t: "Corsier-sur-Vevey 122048", level: 2, kind: "item" },
  { t: "Corsier-sur-Vevey 122076", level: 2, kind: "item" },
  { t: "La Tour-de-Peilz 122050", level: 2, kind: "item" },
  { t: "Saint-Légier 122025", level: 2, kind: "item" },
];

const resultIndent = ["pl-2", "pl-7", "pl-12"];

function ResultsPopup() {
  return (
    <div className="absolute top-[43px] right-[158px] left-[710px] bg-white shadow-[0_2px_8px_rgba(0,0,0,0.3)]">
      <ul className="relative h-[704px] overflow-hidden pt-px">
        {results.map((r, i) => (
          <li key={i} className={`flex h-[23px] items-center ${resultIndent[r.level]}`}>
            <span className={r.kind === "focus" ? "flex w-[13px] shrink-0" : "flex w-4 shrink-0"}>
              {r.kind === "group" && <Expander open />}
            </span>
            {r.kind === "focus" ? (
              <button
                type="button"
                className="mr-px h-[22px] flex-1 border border-dotted border-[#777] pl-0.5 text-left leading-5 whitespace-nowrap"
              >
                {r.t}
              </button>
            ) : (
              <button
                type="button"
                className={r.kind === "item" ? "flex-1 text-left whitespace-nowrap" : "flex-1 text-left font-bold whitespace-nowrap"}
              >
                {r.t}
              </button>
            )}
          </li>
        ))}
      </ul>
      <button type="button" aria-label="Scroll down" className="mx-px mb-px flex h-[10px] w-[calc(100%-2px)] items-center justify-center bg-[#ebebeb]">
        <Chevron dark />
      </button>
      <svg viewBox="0 0 12 20" className="pointer-events-none absolute top-[168px] left-[405px] h-5 w-3 overflow-visible" aria-hidden="true">
        <path d="M1 1v15l3.500-3.200L7 18.500l2.600-1.200L7.200 12H12Z" fill="#111" stroke="#fff" />
      </svg>
    </div>
  );
}

const field = "rounded-[3px] border border-[#b2b2b2] bg-[#ebebeb] shadow-[inset_0_1px_1px_rgba(0,0,0,0.15)]";

function StatusBar() {
  return (
    <footer className="flex h-[37px] shrink-0 items-center justify-end pt-[3px] pr-9 pb-px whitespace-nowrap">
      <button type="button" aria-label="Toggle extents">
        <Svg className="size-[18px]" box="0 0 18 18">
          <rect x="1" y="1" width="16" height="16" rx="2" fill="#dedede" stroke="#bbb" />
          <g stroke="#111" strokeWidth="1.500" fill="#fff">
            <ellipse cx="11" cy="13" rx="4.500" ry="3.800" />
            <ellipse cx="4.500" cy="6" rx="2.200" ry="4" transform="rotate(-25 4.500 6)" />
            <ellipse cx="9" cy="4.500" rx="2" ry="4" transform="rotate(-12 9 4.500)" />
            <path d="M5 11c-1 3 2 6 5 6M12 6l4-3" fill="none" />
            <circle cx="12" cy="13.500" r="1.200" />
          </g>
        </Svg>
      </button>
      <label htmlFor="coordinate" className="ml-2.5 w-[76px]">Coordinate:</label>
      <input id="coordinate" defaultValue="554057.57,146374.63" className={`${field} ml-2.5 h-8 w-[298px] text-center text-[15px]`} />
      <label htmlFor="scale" className="ml-2.5 w-9">Scale</label>
      <span className="relative ml-3 flex">
        <select id="scale" defaultValue="1:72" className={`${field} h-7 w-[119px] appearance-none pl-1`}>
          <option>1:72</option>
        </select>
        <span className="pointer-events-none absolute top-px right-px bottom-px flex w-[22px] items-center justify-center rounded-r-[2px] bg-linear-to-b from-white to-[#ececec]">
          <Chevron dark />
        </span>
      </span>
      <label htmlFor="rotation" className="ml-2.5 w-[59px]">Rotation:</label>
      <span className="ml-2.5 flex h-8 w-[119px]">
        <input id="rotation" defaultValue="0.0" className={`${field} w-[100px] pl-1`} />
        <span className="-ml-px flex flex-1 flex-col rounded-r-[3px] border border-[#b2b2b2] bg-linear-to-b from-white to-[#ececec]">
          <button type="button" aria-label="Increase" className="flex flex-1 rotate-180 items-center justify-center">
            <Svg className="size-2" box="0 0 8 8"><path d="M1 3l3 3 3-3" stroke="#888" strokeWidth="2" /></Svg>
          </button>
          <button type="button" aria-label="Decrease" className="flex flex-1 items-center justify-center border-t border-[#ddd]">
            <Svg className="size-2" box="0 0 8 8"><path d="M1 2l3 3 3-3" stroke="#888" strokeWidth="2" /></Svg>
          </button>
        </span>
      </span>
      <span className="ml-2.5 flex items-center gap-1">
        <CheckBox id="render" state="on" />
        <label htmlFor="render" className="w-[46px]">Render</label>
      </span>
      <button type="button" className="ml-[17px] flex items-center gap-1">
        <Svg className="size-[22px]" box="0 0 22 22">
          <g stroke="#111" strokeWidth="1.300">
            <circle cx="11" cy="11" r="9.500" />
            <ellipse cx="11" cy="11" rx="5.500" ry="9.500" />
            <ellipse cx="11" cy="11" rx="9.500" ry="5.500" />
            <path d="M11 1L1 11l10 10 10-10Z" />
            <path d="M7.500 7.500h7v7h-7Z" fill="#ececec" />
          </g>
        </Svg>
        <span className="w-[126px] text-left text-[15px]">EPSG:21781 (OTF)</span>
      </button>
      <button type="button" aria-label="Messages" className="ml-[21px]">
        <Svg>
          <ellipse cx="12" cy="11" rx="11" ry="9.500" fill="#686868" />
          <path d="M14 18l7 5.500-1.500-9Z" fill="#686868" />
        </Svg>
      </button>
    </footer>
  );
}

const topTools: [IconName, string][] = [
  ["python", "Python console"],
  ["link", "Link"],
  ["circles", "Share"],
  ["binoculars", "Find"],
  ["drop1", "Cut line"],
  ["drop2", "Junction"],
  ["drop3", "Drop"],
  ["drop4", "Pipe"],
  ["undoBlue", "Reload"],
  ["undoTools", "Reload settings"],
];

const col1a: [IconName, string, boolean?][] = [
  ["info", "Identify"],
  ["gear", "Run action", true],
  ["select", "Select", true],
  ["deselect", "Deselect"],
  ["epsilon", "Select by expression"],
  ["table", "Attribute table"],
  ["sigma", "Statistics"],
  ["ruler", "Measure", true],
];
const col1b: [IconName, string][] = [
  ["square", "Advanced digitizing"],
  ["undo", "Undo"],
  ["redo", "Redo"],
  ["rotateFeature", "Rotate feature"],
  ["addRing", "Add ring"],
  ["addPart", "Add part"],
  ["fillRing", "Fill ring"],
  ["delRing", "Delete ring"],
  ["delPart", "Delete part"],
  ["split", "Split features"],
  ["splitParts", "Split parts"],
  ["merge", "Merge features"],
  ["fillTool", "Merge attributes"],
  ["rotate", "Rotate symbols"],
];
const col2a: [IconName, string][] = [
  ["hand", "Pan"],
  ["panSelection", "Pan to selection"],
  ["zoomLast", "Zoom last"],
  ["zoomNext", "Zoom next"],
];
const col2b: [IconName, string][] = [
  ["pencils", "Current edits"],
  ["pencil", "Toggle editing"],
  ["savePencil", "Save edits"],
  ["points", "Add feature"],
  ["moveFeature", "Move feature"],
  ["nodeTool", "Node tool"],
  ["trash", "Delete selected"],
  ["scissors", "Cut"],
  ["copy", "Copy"],
  ["paste", "Paste"],
];
const rightTools: [IconName, string][] = [
  ["abc", "Labeling"],
  ["abPin", "Highlight pinned labels"],
  ["abPinGrey", "Pin labels"],
  ["abEye", "Show or hide labels"],
  ["abMove", "Move label"],
  ["abRotate", "Rotate label"],
];

export default function App() {
  return (
    <div className="relative flex h-screen flex-col overflow-hidden bg-[#ececec] font-['Noto_Sans',sans-serif] text-sm leading-5 text-[#2e3436]">
      <header className="relative flex h-[33px] shrink-0 items-center justify-center border-b border-[#a3a3a3] bg-linear-to-b from-[#f5f5f5] to-[#ebebeb] pb-0.5">
        <h1 className="font-bold">QGIS f39fbf4 – qwat</h1>
        <div className="absolute top-0 right-3 flex h-7 items-center gap-[26px]">
          <button type="button" aria-label="Minimize">
            <Svg className="size-2" box="0 0 8 8"><path d="M0 6.500h8" stroke="#2e3436" strokeWidth="2" /></Svg>
          </button>
          <button type="button" aria-label="Close">
            <Svg className="size-2" box="0 0 8 8"><path d="M.5.5l7 7M7.500.5l-7 7" stroke="#2e3436" strokeWidth="2.200" /></Svg>
          </button>
        </div>
      </header>
      <nav className="flex h-[29px] shrink-0 items-center gap-[18px] pb-0.5 pl-[11px]">
        {menus.map(([a, u, b]) => (
          <button key={a + u + b} type="button" className="whitespace-nowrap">
            {a}
            <span className="underline underline-offset-4">{u}</span>
            {b}
          </button>
        ))}
      </nav>
      <div className="flex h-[38px] shrink-0 items-center pb-[2px]">
        <VGrip first />
        <ToolButton icon="open" label="Open project" />
        <ToolButton icon="save" label="Save project" />
        <VGrip />
        <ToolButton icon="csw" label="CSW catalog" />
        <VGrip />
        {topTools.map(([icon, label]) => (
          <ToolButton key={icon} icon={icon} label={label} pressed={icon === "link"} />
        ))}
        <VGrip />
        <div className="flex-1" />
        <ToolButton icon="search" label="Search" />
        <VGrip />
        <ToolButton icon="arc" label="Arc" />
        <button type="button" aria-label="More tools" className="w-3">
          <Svg className="h-2 w-3" box="0 0 12 8"><path d="M3 1l3 3-3 3M8 1l3 3-3 3" stroke="#111" strokeWidth="1.500" /></Svg>
        </button>
        <VGrip />
        <ToolButton icon="orange" label="Plugin" />
        <button type="button" aria-label="More plugins" className="w-3">
          <Svg className="h-2 w-3" box="0 0 12 8"><path d="M3 1l3 3-3 3M8 1l3 3-3 3" stroke="#111" strokeWidth="1.500" /></Svg>
        </button>
      </div>
      <div className="flex min-h-0 flex-1">
        <div className="flex w-[58px] shrink-0 flex-col pt-px">
          <HGrip />
          {col1a.map(([icon, label, drop]) => (
            <div key={icon} className={drop ? "flex items-center pl-px" : "flex items-center justify-center"}>
              <ToolButton icon={icon} label={label} />
              {drop && (
                <button type="button" aria-label={`${label} options`} className="ml-1">
                  <Chevron dark={icon === "ruler"} />
                </button>
              )}
            </div>
          ))}
          <div className="mt-9 flex flex-col items-center">
            <HGrip />
            {col1b.map(([icon, label]) => (
              <ToolButton key={icon} icon={icon} label={label} />
            ))}
          </div>
        </div>
        <div className="flex w-[47px] shrink-0 flex-col items-center">
          <HGrip />
          {col2a.map(([icon, label]) => (
            <ToolButton key={icon} icon={icon} label={label} pressed={icon === "hand"} />
          ))}
          <div className="mt-[137px] flex w-full flex-col items-center">
            <HGrip />
            {col2b.map(([icon, label]) =>
              icon === "pencils" ? (
                <div key={icon} className="flex w-full items-center pl-0.5">
                  <ToolButton icon={icon} label={label} />
                  <button type="button" aria-label="Edit options" className="-ml-1.5"><Chevron /></button>
                </div>
              ) : (
                <ToolButton key={icon} icon={icon} label={label} />
              ),
            )}
          </div>
        </div>
        <LayersPanel />
        <div className="w-1.5 shrink-0 bg-[#f1f1f1]" />
        <MapCanvas />
        <div className="flex w-[38px] shrink-0 flex-col items-center pt-0.5">
          <HGrip />
          {rightTools.map(([icon, label]) => (
            <ToolButton key={icon} icon={icon} label={label} />
          ))}
        </div>
      </div>
      <StatusBar />
      <ResultsPopup />
    </div>
  );
}
